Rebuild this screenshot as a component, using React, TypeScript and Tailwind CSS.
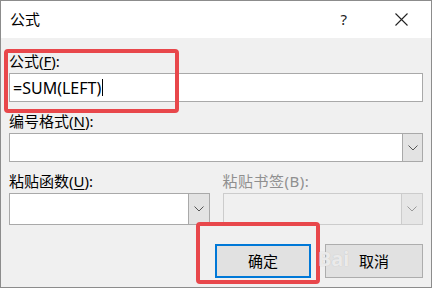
import React from "react";

const Chevron = () => (
  <svg width="10" height="6" viewBox="0 0 10 6" fill="none">
    <path d="M0.5 0.5 L5 5 L9.5 0.5" stroke="#555" strokeWidth="1" />
  </svg>
);

const ChevronLight = () => (
  <svg width="10" height="6" viewBox="0 0 10 6" fill="none">
    <path d="M0.5 0.5 L5 5 L9.5 0.5" stroke="#9a9a9a" strokeWidth="1" />
  </svg>
);

export default function App() {
  const font = { fontFamily: "'Noto Sans', 'Noto Sans CJK SC', sans-serif" };
  return (
    <div className="w-[432px] h-[290px] bg-white relative overflow-hidden" style={font}>
      <div className="w-[432px] h-[288px] border-l border-r border-t border-b border-[#8c8c8c] flex flex-col">
        {/* Title bar */}
        <div className="h-[37px] bg-white flex items-center pl-[9px] pr-[23px] shrink-0">
          <span className="text-[15px] text-black leading-none">公式</span>
          <span className="ml-auto text-[15px] text-[#222] leading-none mr-[48px]">?</span>
          <svg width="13" height="13" viewBox="0 0 13 13">
            <path d="M0.5 0.5 L12.5 12.5 M12.5 0.5 L0.5 12.5" stroke="#222" strokeWidth="1.1" />
          </svg>
        </div>
        {/* Body */}
        <div className="flex-1 bg-[#f0f0f0] px-[8px] pt-[13px] flex flex-col">
          <div className="h-[20px] text-[15px] leading-[20px] text-black">
            公式(<span className="underline underline-offset-2">F</span>):
          </div>
          <div className="mt-[2px] h-[29px] bg-white border border-[#a9a9a9] flex items-center pl-[3px]">
            <span className="text-[16px] text-black leading-none">=SUM(LEFT)</span>
            <span className="w-[1px] h-[17px] bg-black ml-[1px]" />
          </div>

          <div className="mt-[9px] h-[20px] text-[15px] leading-[20px] text-black">
            编号格式(<span className="underline underline-offset-2">N</span>):
          </div>
          <div className="mt-[2px] h-[29px] bg-white border border-[#a9a9a9] flex">
            <div className="flex-1" />
            <div className="w-[20px] bg-[#e3e3e3] border-l border-[#a9a9a9] flex items-center justify-center">
              <Chevron />
            </div>
          </div>

          <div className="mt-[9px] grid grid-cols-2 gap-x-[13px]">
            <div className="flex flex-col">
              <div className="h-[20px] text-[15px] leading-[20px] text-black">
                粘贴函数(<span className="underline underline-offset-2">U</span>):
              </div>
              <div className="mt-[2px] h-[32px] bg-white border border-[#a9a9a9] flex">
                <div className="flex-1" />
                <div className="w-[21px] bg-[#e3e3e3] border-l border-[#a9a9a9] flex items-center justify-center">
                  <Chevron />
                </div>
              </div>
            </div>
            <div className="flex flex-col">
              <div className="h-[20px] text-[15px] leading-[20px] text-[#8f8f8f] tracking-[0.5px]">粘贴书签(B):</div>
              <div className="mt-[2px] h-[32px] bg-[#f0f0f0] border border-[#cccccc] flex">
                <div className="flex-1" />
                <div className="w-[21px] bg-[#e6e6e6] border-l border-[#cccccc] flex items-center justify-center">
                  <ChevronLight />
                </div>
              </div>
            </div>
          </div>

          <div className="mt-[19px] flex justify-end gap-[14px]">
            <div className="w-[96px] h-[34px] bg-[#e1e1e1] border-2 border-[#0078d7] flex items-center justify-center text-[15px] text-black">
              确定
            </div>
            <div className="w-[98px] h-[34px] bg-[#e1e1e1] border border-[#adadad] flex items-center justify-center text-[15px] text-black">
              取消
            </div>
          </div>
        </div>
      </div>

      {/* Red annotation boxes */}
      <div className="absolute left-[4px] top-[49px] w-[175px] h-[64px] border-[4px] border-[#e8474b] rounded-[4px]" />
      <div className="absolute left-[196px] top-[222px] w-[124px] h-[62px] border-[4px] border-[#e8474b] rounded-[4px]" />

      {/* Watermark */}
      <div className="absolute left-[318px] top-[248px] pointer-events-none">
        <span className="text-[20px] font-bold text-white/70 leading-none" style={{ textShadow: "0 0 1px #bbb" }}>Bai</span>
      </div>
    </div>
  );
}
